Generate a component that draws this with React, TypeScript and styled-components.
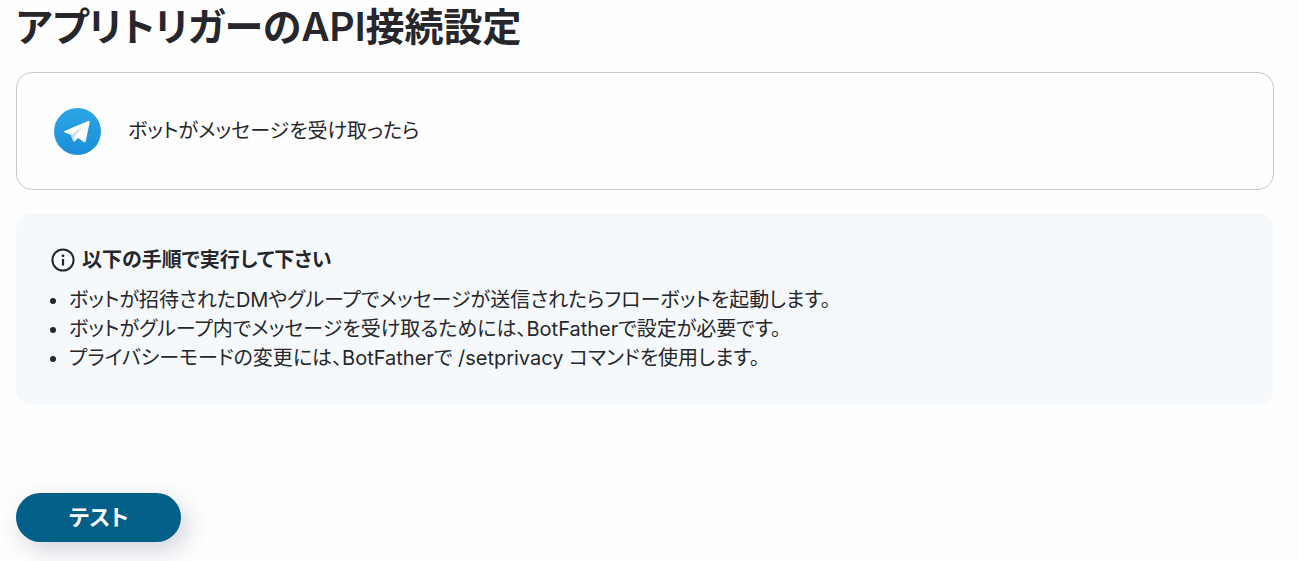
import React from "react";
import styled, { createGlobalStyle } from "styled-components";

const GlobalStyle = createGlobalStyle`
  * { box-sizing: border-box; }
  body {
    margin: 0;
    background: #fefefe;
    color: #27272b;
    font-family: Inter, "Noto Sans CJK JP", sans-serif;
    font-feature-settings: "palt";
  }
`;

const Page = styled.main`
  display: flex;
  flex-direction: column;
  align-items: stretch;
  padding: 0 25px 19px 16px;
`;

const Title = styled.h1`
  margin: 0 0 18px;
  font-size: 39px;
  line-height: 54px;
  font-weight: 600;
`;

const TriggerCard = styled.section`
  display: flex;
  align-items: center;
  gap: 26px;
  min-height: 118px;
  padding: 24px 37px;
  border: 1px solid #c9c8cc;
  border-radius: 16px;
  font-size: 20px;
  line-height: 28px;
`;

const Notice = styled.section`
  margin-top: 23px;
  padding: 33px 35px 32px;
  border-radius: 16px;
  background: #f5f9fc;
  font-size: 20px;
`;

const NoticeTitle = styled.h2`
  display: flex;
  align-items: center;
  gap: 7px;
  margin: 0 0 12px;
  font-size: 20px;
  line-height: 28px;
  font-weight: 600;
`;

const Steps = styled.ul`
  margin: 0;
  padding-left: 18px;
  line-height: 29px;
`;

const TestButton = styled.button`
  align-self: flex-start;
  margin-top: 88px;
  padding: 0 53px 5px;
  height: 49px;
  border: 0;
  border-radius: 25px;
  background: #025f87;
  color: #fff;
  font: inherit;
  font-size: 22px;
  font-weight: 700;
  box-shadow: 6px 8px 24px rgba(50, 60, 100, 0.22);
`;

const TelegramIcon = () => (
  <svg width="48" height="48" viewBox="0 0 48 48" aria-hidden="true">
    <defs>
      <linearGradient id="sky" x1="0" y1="0" x2="0" y2="1">
        <stop offset="0" stopColor="#2ba5e3" />
        <stop offset="1" stopColor="#1b8edb" />
      </linearGradient>
    </defs>
    <circle cx="23.5" cy="24.5" r="23.5" fill="url(#sky)" />
    <path d="M10.5 25.3Q9 24.8 10.5 24L34 14Q36 13.3 35.6 15.5L31.8 34Q31.3 36 29.5 34.8L24 31 20.8 34.2Q19.3 35 18.8 33L17 28Z" fill="#fff" />
    <path d="M17 28 29.5 19 20.8 29 20.2 34.4Q19.2 34.4 18.8 33Z" fill="#d3dcf3" />
  </svg>
);

const InfoIcon = () => (
  <svg width="24" height="24" viewBox="0 0 24 24" fill="none" stroke="#222427" strokeWidth="2" aria-hidden="true">
    <circle cx="12" cy="12" r="10.6" />
    <path d="M12 11v6.5" strokeWidth="2.2" />
    <circle cx="12" cy="7.8" r="1.4" fill="#222427" stroke="none" />
  </svg>
);

export default function App() {
  return (
    <>
      <GlobalStyle />
      <Page>
        <Title>アプリトリガーのAPI接続設定</Title>
        <TriggerCard>
          <TelegramIcon />
          <span>ボットがメッセージを受け取ったら</span>
        </TriggerCard>
        <Notice>
          <NoticeTitle>
            <InfoIcon />
            以下の手順で実行して下さい
          </NoticeTitle>
          <Steps>
            <li>ボットが招待されたDMやグループでメッセージが送信されたらフローボットを起動します。</li>
            <li>ボットがグループ内でメッセージを受け取るためには、BotFatherで設定が必要です。</li>
            <li>プライバシーモードの変更には、BotFatherで /setprivacy コマンドを使用します。</li>
          </Steps>
        </Notice>
        <TestButton type="button">テスト</TestButton>
      </Page>
    </>
  );
}
